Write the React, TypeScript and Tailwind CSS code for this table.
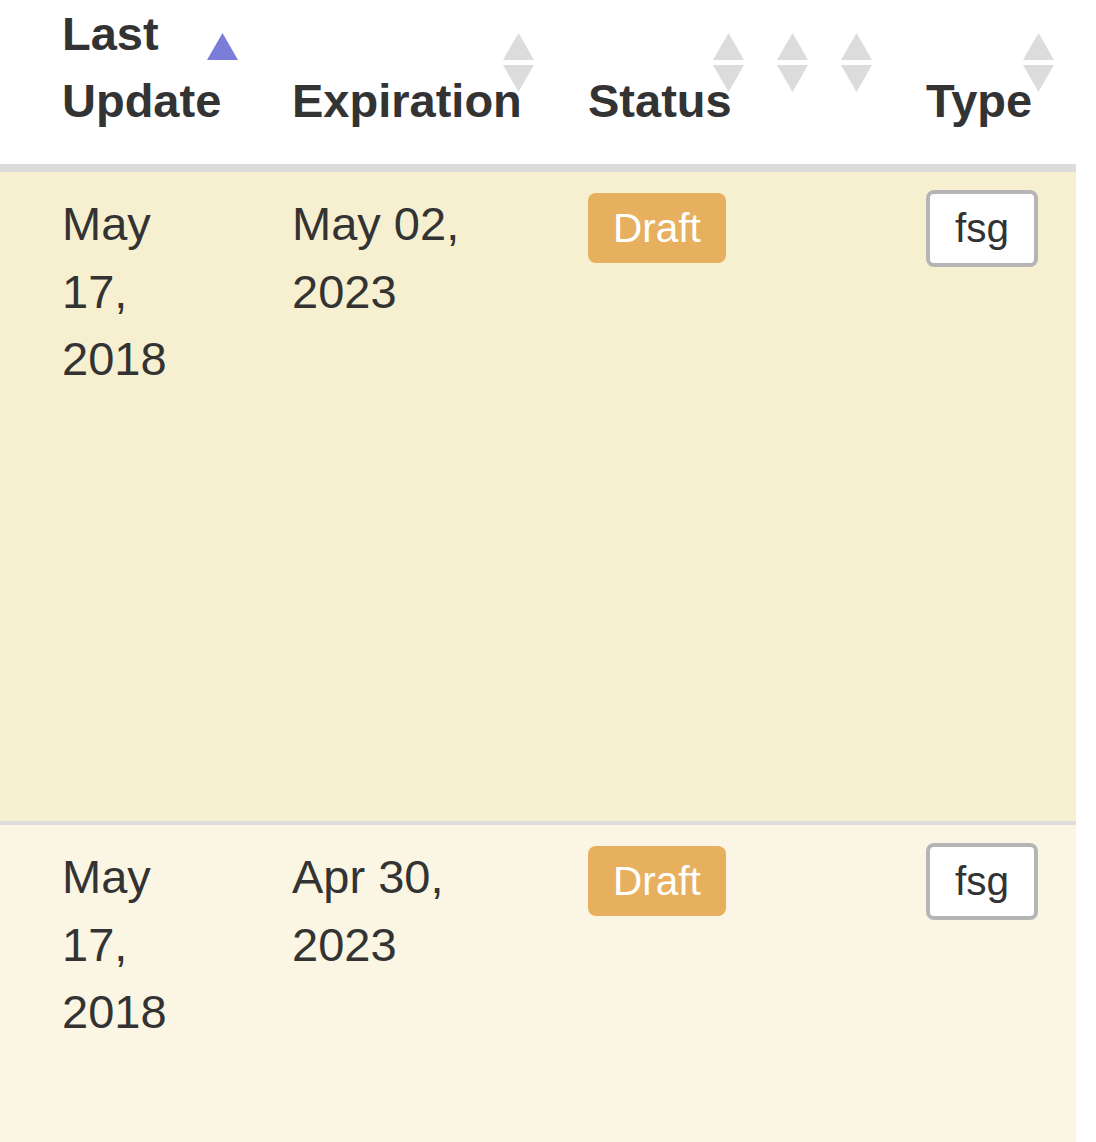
import clsx from "clsx";

const cols = "grid grid-cols-[272px_296px_210px_64px_64px_182px]";

type Sort = "both" | "asc";

function SortIcon({ sort }: { sort: Sort }) {
  return (
    <svg
      className="absolute right-[34px] top-[33px]"
      width="31"
      height="59"
      viewBox="0 0 31 59"
    >
      <polygon points="15.5,0 31,27 0,27" fill={sort === "asc" ? "#7a7ed8" : "#dcdcdc"} />
      {sort === "both" && <polygon points="0,32 31,32 15.5,59" fill="#dcdcdc" />}
    </svg>
  );
}

function HeaderCell({ label, first, sort }: { label?: string; first?: boolean; sort: Sort }) {
  if (!label) {
    // empty sortable column, icon only
    return (
      <div className="relative">
        <SortIcon sort={sort} />
      </div>
    );
  }
  return (
    <div
      className={clsx(
        "relative flex min-h-0 flex-col justify-end pb-[30px] pr-[50px] font-bold",
        first ? "pl-[62px]" : "pl-[20px]"
      )}
    >
      <SortIcon sort={sort} />
      <div className="relative -mt-[10px] leading-[66.5px]">{label}</div>
    </div>
  );
}

function Row({ update, expiration, tall, bg }: { update: string; expiration: string; tall?: boolean; bg: string }) {
  return (
    <div
      className={clsx(
        cols,
        "border-b-[4px] border-[#dddddd]",
        tall ? "h-[653px]" : "h-[340px]",
        bg
      )}
    >
      <div className="pl-[62px] pr-[60px] pt-[18px]">{update}</div>
      <div className="pl-[20px] pr-[44px] pt-[18px]">{expiration}</div>
      <div className="flex items-start pl-[20px] pt-[18px]">
        <span className="mt-[3px] h-[70px] rounded-[8px] bg-[#e7b05f] px-[25px] text-[40.5px] leading-[70px] text-white">
          Draft
        </span>
      </div>
      <div />
      <div />
      <div className="flex items-start pl-[20px] pt-[18px]">
        <span className="h-[77px] w-[112px] rounded-[8px] border-[4px] border-[#b5b5b5] bg-white text-center text-[40.5px] leading-[69px] text-[#333333]">
          fsg
        </span>
      </div>
    </div>
  );
}

export default function App() {
  return (
    <div className="h-[1142px] overflow-hidden bg-white font-['Liberation_Sans',Arial,Helvetica,sans-serif] text-[47px] leading-[67.5px] text-[#333333]">
      <div className="w-[1076px] overflow-hidden">
        <div className="w-[1088px]">
          {/* header — sorted on Last Update */}
          <div className={clsx(cols, "h-[172px] grid-rows-[164px] border-b-[8px] border-[#dcdcdc] bg-white")}>
            <HeaderCell label="Last Update" first sort="asc" />
            <HeaderCell label="Expiration" sort="both" />
            <HeaderCell label="Status" sort="both" />
            <HeaderCell sort="both" />
            <HeaderCell sort="both" />
            <HeaderCell label="Type" sort="both" />
          </div>

          <Row update="May 17, 2018" expiration="May 02, 2023" tall bg="bg-[#f7f0d0]" />
          <Row update="May 17, 2018" expiration="Apr 30, 2023" bg="bg-[#faf6e3]" />
        </div>
      </div>
    </div>
  );
}
